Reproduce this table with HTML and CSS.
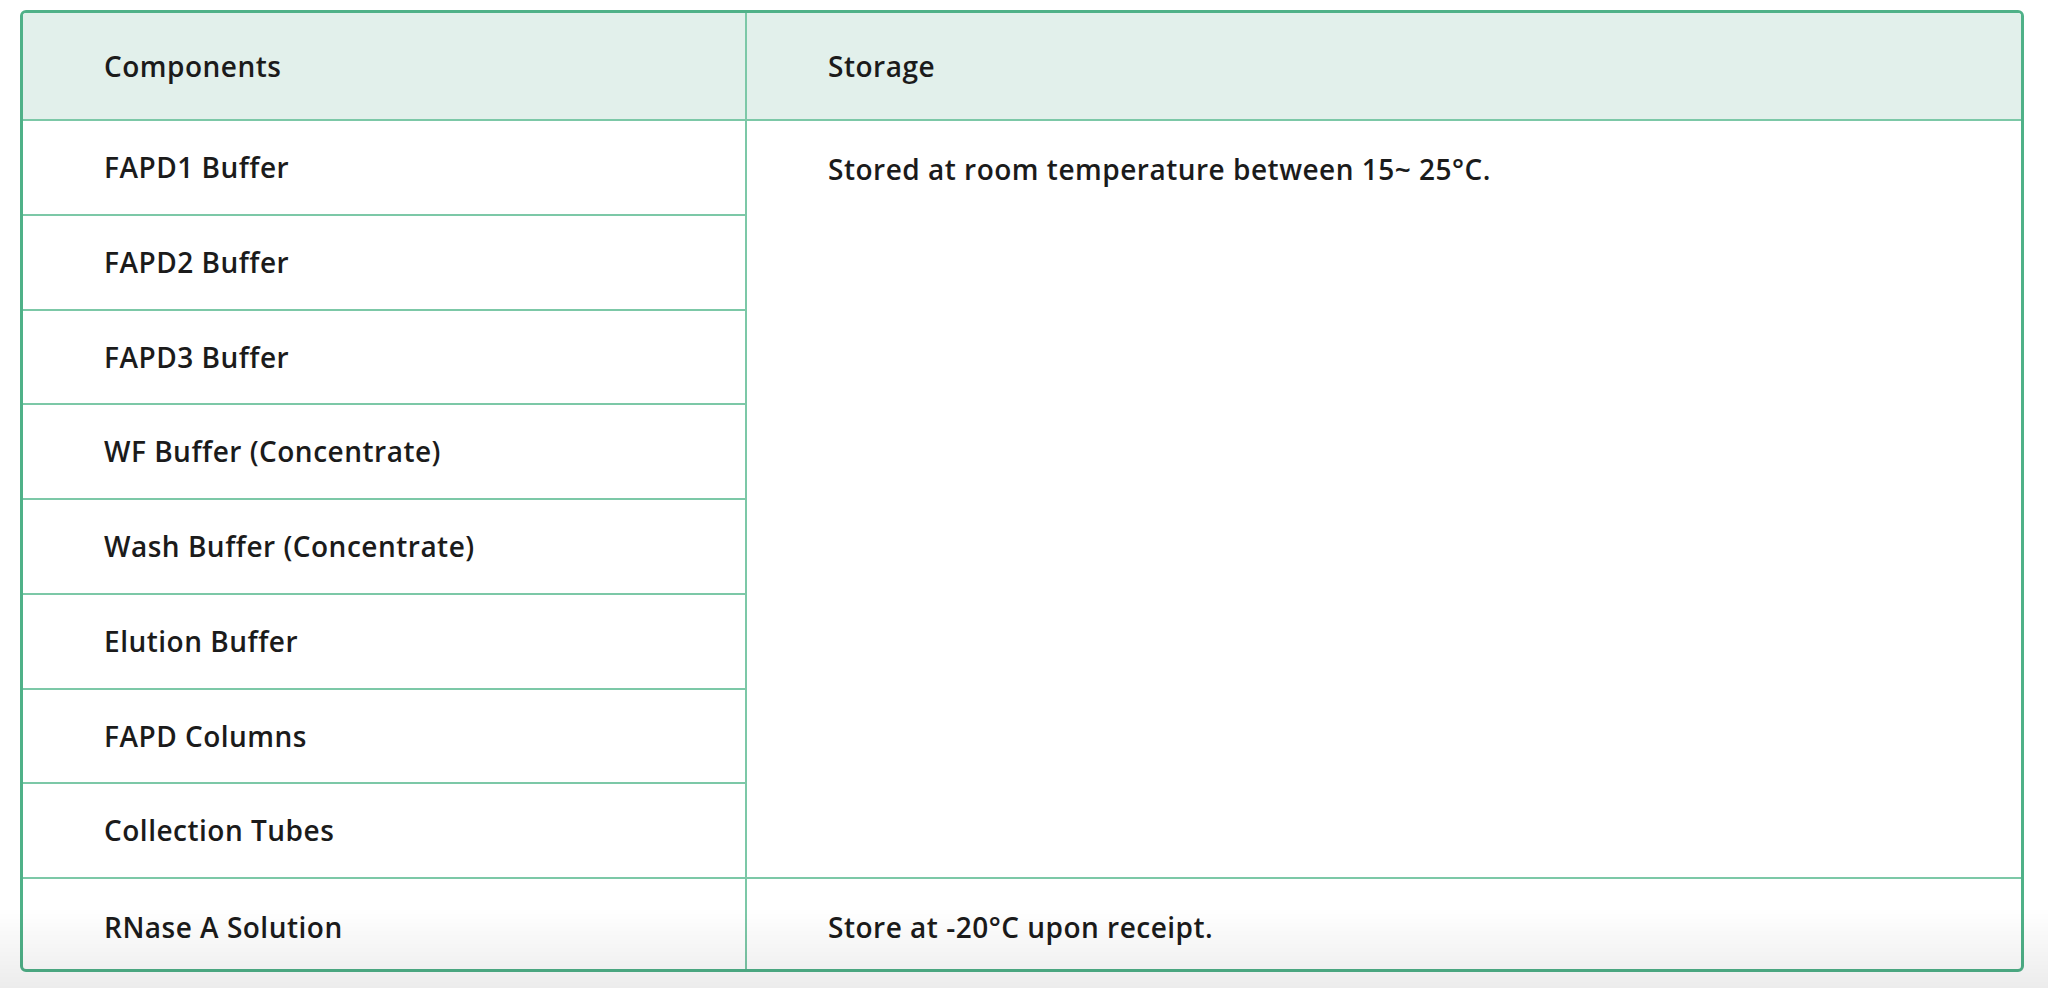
FILE: index.html
```html
<!DOCTYPE html>
<html lang="en">
<head>
<meta charset="utf-8">
<title>Components and Storage</title>
<link rel="stylesheet" href="styles.css">
</head>
<body>
<div class="page">
  <div class="table">
    <div class="cell head left">Components</div>
    <div class="cell head right">Storage</div>

    <div class="cell left">FAPD1 Buffer</div>
    <div class="cell right span">Stored at room temperature between 15~ 25°C.</div>
    <div class="cell left">FAPD2 Buffer</div>
    <div class="cell left">FAPD3 Buffer</div>
    <div class="cell left">WF Buffer (Concentrate)</div>
    <div class="cell left">Wash Buffer (Concentrate)</div>
    <div class="cell left">Elution Buffer</div>
    <div class="cell left">FAPD Columns</div>
    <div class="cell left">Collection Tubes</div>

    <div class="cell left last">RNase A Solution</div>
    <div class="cell right last">Store at -20°C upon receipt.</div>
  </div>
</div>
<div class="fade"></div>
</body>
</html>
```

FILE: styles.css
```css
html, body {
  margin: 0;
  padding: 0;
  background: #ffffff;
}

body {
  font-family: "Open Sans", "Noto Sans", sans-serif;
  color: #1b1b1b;
}

.page {
  padding: 10px 24px 10px 20px;
}

.table {
  display: grid;
  grid-template-columns: 724px 1fr;
  grid-template-rows: 108px repeat(8, 94.75px) 96px;
  border: 3px solid #4fb188;
  border-radius: 6px;
  overflow: hidden;
  height: 962px;
  box-sizing: border-box;
}

.cell {
  display: flex;
  align-items: center;
  padding-left: 81px;
  font-size: 28px;
  font-weight: 600;
  letter-spacing: 0.5px;
  border-bottom: 2px solid #7cc8a7;
  box-sizing: border-box;
  line-height: 1.3;
}

.head {
  background: #e2f0eb;
}

.left {
  grid-column: 1;
  border-right: 2px solid #7cc8a7;
}

.right {
  grid-column: 2;
}

.span {
  grid-row: 2 / span 8;
  align-items: flex-start;
  padding-top: 30px;
}

.last {
  border-bottom: none;
}

.fade {
  position: fixed;
  left: 0;
  right: 0;
  bottom: 0;
  height: 80px;
  background: linear-gradient(to bottom, rgba(0, 0, 0, 0), rgba(0, 0, 0, 0.075));
  pointer-events: none;
}
```
